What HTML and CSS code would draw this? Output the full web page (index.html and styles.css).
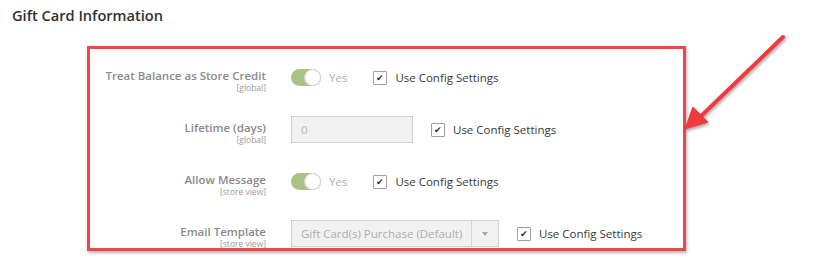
FILE: index.html
```html
<!DOCTYPE html>
<html lang="en">
<head>
    <meta charset="UTF-8">
    <title>Gift Card Information</title>
    <link rel="stylesheet" href="styles.css">
</head>
<body>

<h2 class="section-title">Gift Card Information</h2>

<div class="highlight-box">
    <!-- Treat Balance -->
    <div class="field-row">
        <div class="field-label">
            <span class="label-text">Treat Balance as Store Credit</span>
            <span class="scope">[global]</span>
        </div>
        <div class="field-control">
            <span class="switch"><span class="knob"></span></span>
            <span class="switch-text">Yes</span>
            <label class="use-config switch-gap"><span class="check">&#10004;</span>Use Config Settings</label>
        </div>
    </div>

    <!-- Lifetime -->
    <div class="field-row">
        <div class="field-label">
            <span class="label-text">Lifetime (days)</span>
            <span class="scope">[global]</span>
        </div>
        <div class="field-control">
            <span class="text-input">0</span>
            <label class="use-config input-gap"><span class="check">&#10004;</span>Use Config Settings</label>
        </div>
    </div>

    <!-- Allow Message -->
    <div class="field-row">
        <div class="field-label">
            <span class="label-text">Allow Message</span>
            <span class="scope">[store view]</span>
        </div>
        <div class="field-control">
            <span class="switch"><span class="knob"></span></span>
            <span class="switch-text">Yes</span>
            <label class="use-config switch-gap"><span class="check">&#10004;</span>Use Config Settings</label>
        </div>
    </div>

    <!-- Email Template -->
    <div class="field-row">
        <div class="field-label">
            <span class="label-text">Email Template</span>
            <span class="scope">[store view]</span>
        </div>
        <div class="field-control">
            <span class="select-input">
                <span class="select-value">Gift Card(s) Purchase (Default)</span>
                <span class="select-arrow"></span>
            </span>
            <label class="use-config input-gap"><span class="check">&#10004;</span>Use Config Settings</label>
        </div>
    </div>
</div>

<!-- annotation arrow -->
<svg class="arrow" width="120" height="110" viewBox="0 0 120 110">
    <defs>
        <filter id="shadow" x="-20%" y="-20%" width="140%" height="140%">
            <feDropShadow dx="1" dy="2" stdDeviation="1.5" flood-color="#000" flood-opacity="0.35"/>
        </filter>
    </defs>
    <g filter="url(#shadow)" fill="#ee3b3f" stroke="#ee3b3f">
        <line x1="103" y1="7" x2="18" y2="89" stroke-width="4" stroke-linecap="round"/>
        <polygon points="6,98 13,78 27,92" stroke-width="2" stroke-linejoin="round"/>
    </g>
</svg>

</body>
</html>
```

FILE: styles.css
```css
body {
    margin: 0;
    padding: 0;
    background: #fff;
    font-family: 'Open Sans', 'Liberation Sans', sans-serif;
    color: #333;
    width: 839px;
    height: 257px;
    position: relative;
    overflow: hidden;
}

.section-title {
    margin: 0;
    padding: 5px 0 0 12px;
    font-size: 14.6px;
    font-weight: 600;
    line-height: 20px;
    color: #303030;
}

.highlight-box {
    box-sizing: border-box;
    margin: 21px 0 0 87px;
    width: 599px;
    height: 205px;
    border: 3px solid #f2454a;
    box-shadow: 1px 2px 3px rgba(0, 0, 0, 0.3);
    padding-top: 13px;
    display: flex;
    flex-direction: column;
    gap: 25px;
}

.field-row {
    display: grid;
    grid-template-columns: 176px auto;
    column-gap: 25px;
    height: 27px;
}

.field-label {
    text-align: right;
    display: flex;
    flex-direction: column;
    align-items: flex-end;
    padding-top: 6px;
}

.label-text {
    font-size: 11.5px;
    font-weight: 600;
    line-height: 15px;
    color: #8a8a8a;
    white-space: nowrap;
}

.scope {
    font-size: 8.5px;
    line-height: 10px;
    color: #9a9a9a;
}

.field-control {
    display: flex;
    align-items: center;
}

/* toggle */
.switch {
    width: 30px;
    height: 17px;
    border-radius: 9px;
    background: #a9c385;
    position: relative;
    display: inline-block;
}

.switch .knob {
    position: absolute;
    right: 0;
    top: 0;
    width: 15px;
    height: 15px;
    border-radius: 50%;
    background: #fff;
    border: 1px solid #d2d2d2;
}

.switch-text {
    margin-left: 8px;
    font-size: 11.5px;
    color: #adadad;
}

.switch-gap { margin-left: 26px; }
.input-gap { margin-left: 18px; }

.use-config {
    display: flex;
    align-items: center;
    font-size: 11.5px;
    color: #3a3a3a;
    white-space: nowrap;
}

.check {
    width: 12px;
    height: 12px;
    border: 1px solid #9e9e9e;
    border-radius: 1px;
    margin-right: 8px;
    font-size: 9px;
    line-height: 12px;
    text-align: center;
    color: #333;
    background: #fff;
}

/* disabled inputs */
.text-input {
    display: inline-block;
    width: 111px;
    height: 25px;
    border: 1px solid #d0d0d0;
    background: #f1f1f1;
    font-size: 11.5px;
    line-height: 25px;
    padding-left: 9px;
    color: #b5b5b5;
}

.select-input {
    display: flex;
    height: 25px;
    border: 1px solid #d0d0d0;
    background: #f1f1f1;
}

.select-value {
    width: 170px;
    padding-left: 9px;
    font-size: 11.5px;
    line-height: 25px;
    color: #adadad;
    white-space: nowrap;
    border-right: 1px solid #d6d6d6;
}

.select-arrow {
    width: 26px;
    position: relative;
}

.select-arrow::after {
    content: "";
    position: absolute;
    left: 10px;
    top: 11px;
    border-left: 3px solid transparent;
    border-right: 3px solid transparent;
    border-top: 4px solid #a5a5a5;
}

.arrow {
    position: absolute;
    left: 680px;
    top: 30px;
}
```
